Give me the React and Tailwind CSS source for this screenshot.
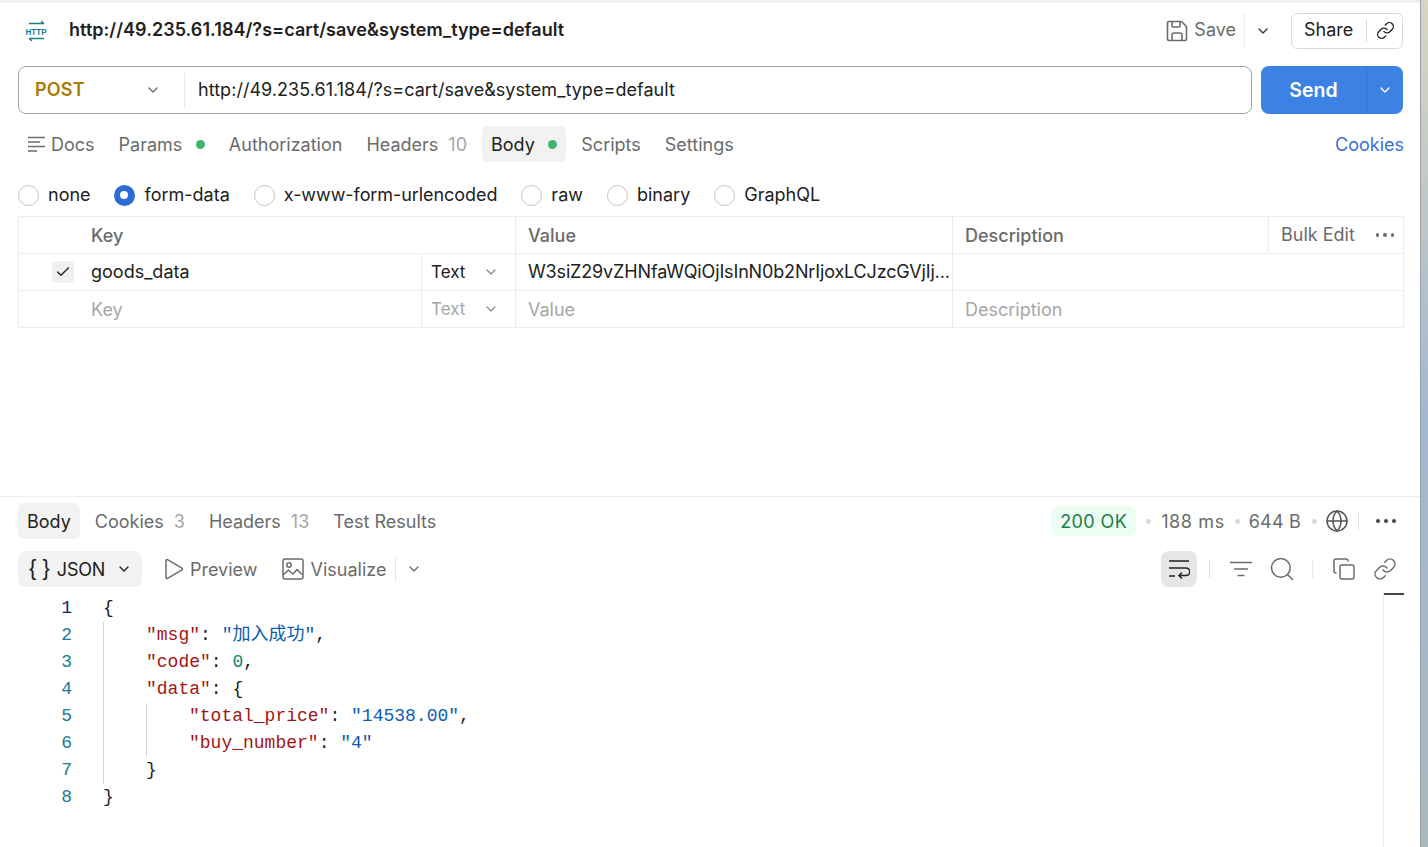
import React from 'react';
import { ChevronDown, Check, Search, Globe, Copy, Link } from 'lucide-react';

const HttpIcon = () => (
  <svg width="24" height="22" viewBox="0 0 24 22" fill="none" className="text-[#17808f]">
    <path d="M5 3.500h15M17 1 20 3.500" stroke="currentColor" strokeWidth="1.3" />
    <path d="M20 18.500H5M8 21 5 18.500" stroke="currentColor" strokeWidth="1.3" />
    <text transform="translate(12 14.500) scale(0.85 1)" textAnchor="middle" fontSize="9.5" fontWeight="700" fill="currentColor" fontFamily="Liberation Sans">HTTP</text>
  </svg>
);

const SaveIcon = () => (
  <svg width="22" height="22" viewBox="0 0 22 22" fill="none" stroke="#6b6b6b" strokeWidth="1.6" strokeLinejoin="round">
    <path d="M1.500 3A1.500 1.500 0 0 1 3 1.500h12.500L20.500 6.500V19a1.500 1.500 0 0 1-1.500 1.500H3A1.500 1.500 0 0 1 1.500 19z" />
    <path d="M6 1.500V6a1 1 0 0 0 1 1h6a1 1 0 0 0 1-1V1.500" />
    <path d="M6 20.500V15a2 2 0 0 1 2-2h6a2 2 0 0 1 2 2v5.500" />
  </svg>
);

const DocsIcon = () => (
  <svg width="17" height="16" viewBox="0 0 17 16" fill="none" stroke="#6b6b6b" strokeWidth="1.5">
    <path d="M0 1.500h17M0 6h12M0 10.500h17M0 15h9" />
  </svg>
);

const PlayIcon = () => (
  <svg width="20" height="22" viewBox="0 0 20 22" fill="none" stroke="#6b6b6b" strokeWidth="1.5" strokeLinejoin="round">
    <path d="M2 2.500v17a1 1 0 0 0 1.500.8l14.500-8.500a1 1 0 0 0 0-1.600L3.500 1.700A1 1 0 0 0 2 2.500z" />
  </svg>
);

const ImageIcon = () => (
  <svg width="22" height="22" viewBox="0 0 22 22" fill="none" stroke="#6b6b6b" strokeWidth="1.5" strokeLinejoin="round">
    <rect x="1" y="1" width="20" height="20" rx="2" />
    <circle cx="7" cy="7" r="2.200" />
    <path d="m1 17 5.500-5 4.500 4 4-4.500 5 5" />
  </svg>
);

const WrapIcon = () => (
  <svg width="22" height="20" viewBox="0 0 22 20" fill="none" stroke="#222" strokeWidth="1.5">
    <path d="M1 2h20M1 9h17a3 3 0 0 1 0 7.500h-7M14 13.500l-3 3 3 3M1 17h6" />
  </svg>
);

const FilterIcon = () => (
  <svg width="22" height="16" viewBox="0 0 22 16" fill="none" stroke="#6b6b6b" strokeWidth="1.5">
    <path d="M0 1.500h22M4 8h14M7.500 14.500h7" />
  </svg>
);

const Dots = ({ small }) => {
  const cls = small ? 'w-[3.500px] h-[3.500px] rounded-full bg-[#6b6b6b]' : 'w-[4px] h-[4px] rounded-full bg-[#444]';
  return (
    <div className="flex gap-[4px]">
      <span className={cls}></span>
      <span className={cls}></span>
      <span className={cls}></span>
    </div>
  );
};

const GreenDot = () => <span className="w-[9px] h-[9px] rounded-full bg-[#3fb56f] ml-[13.5px]"></span>;

const Tab = ({ label, count, dot, active, icon }) => (
  <div className={`h-[36px] px-[9px] flex items-center rounded-[6px] ${active ? 'bg-[#f2f2f2] text-[#212121]' : 'text-[#6b6b6b]'}`}>
    {icon && <span className="mr-[6px]">{icon}</span>}
    <span>{label}</span>
    {count && <span className="ml-[10px] text-[#a6a6a6]">{count}</span>}
    {dot && <GreenDot />}
  </div>
);

const Radio = ({ label, checked, labelClass = '' }) => (
  <div className="flex items-center gap-[9px]">
    {checked ? (
      <span className="-ml-px mr-px w-[21px] h-[21px] rounded-full bg-[#2f6bd6] flex items-center justify-center">
        <span className="w-[8px] h-[8px] rounded-full bg-white"></span>
      </span>
    ) : (
      <span className="w-[21px] h-[21px] rounded-full border border-[#c4c4c4]"></span>
    )}
    <span className={`text-[#212121] mb-[2px] ${labelClass}`}>{label}</span>
  </div>
);

const Cell = ({ children, className = '' }) => (
  <div className={`flex items-center min-w-0 px-[12px] border-l border-[#ededed] first:border-l-0 ${className}`}>{children}</div>
);

const Row = ({ children }) => (
  <div className="grid grid-cols-[402px_94px_437px_1fr] h-[37px] border-b border-[#ededed]">{children}</div>
);

const Str = ({ children }) => <span className="text-[#0b5cb5]">{children}</span>;
const Key = ({ children }) => <span className="text-[#a31515]">{children}</span>;

export default function App() {
  return (
    <div className="flex h-screen overflow-hidden font-['Inter','Noto_Sans_CJK_SC',sans-serif] text-[18px] bg-white">
      <div className="w-[1420px] shrink-0 flex flex-col">
        <div className="h-[3px] bg-[#f0f0f0]"></div>

        {/* request panel */}
        <div className="h-[493px] shrink-0">
          <div className="h-[54px] flex items-center pl-[24px] pr-[17px] pt-[1px]">
            <HttpIcon />
            <span className="ml-[21px] mb-[2px] font-semibold text-[#212121] tracking-[0.04px]">http://49.235.61.184/?s=cart/save&amp;system_type=default</span>
            <div className="ml-auto flex items-center">
              <SaveIcon />
              <span className="ml-[6px] mb-[2px] text-[#6b6b6b]">Save</span>
              <span className="ml-[8px] w-px h-[36px] bg-[#ededed]"></span>
              <ChevronDown size={16} strokeWidth={2} className="ml-[10px] text-[#333]" />
              <div className="ml-[20px] w-[112px] h-[36px] border border-[#d9d9d9] rounded-[6px] flex items-center">
                <span className="ml-[12px] mb-[2px] text-[#212121]">Share</span>
                <span className="ml-[13px] w-px h-[22px] bg-[#d9d9d9]"></span>
                <Link size={19} strokeWidth={1.7} className="ml-[9px] text-[#212121]" />
              </div>
            </div>
          </div>

          <div className="mt-[9px] ml-[18px] mr-[17px] flex gap-[9px]">
            <div className="w-[1234px] h-[48px] border border-[#a6a6a6] rounded-[8px] flex items-center">
              <div className="w-[165px] pl-[16px] pr-[23px] flex items-center justify-between">
                <span className="font-semibold text-[#ad7a03] mb-[2px] tracking-[0.2px]">POST</span>
                <ChevronDown size={16} className="text-[#6b6b6b]" />
              </div>
              <span className="w-px h-[34px] bg-[#e6e6e6]"></span>
              <span className="ml-[13px] mb-[2px] text-[#212121] tracking-[0.04px]">http://49.235.61.184/?s=cart/save&amp;system_type=default</span>
            </div>
            <div className="w-[142px] h-[48px] rounded-[8px] bg-[#3b82e4] flex text-white">
              <span className="w-[106px] pt-[1px] flex items-center justify-center font-semibold text-[19.5px] border-r border-[#3674cc]">Send</span>
              <span className="flex-1 flex items-center justify-center">
                <ChevronDown size={16} />
              </span>
            </div>
          </div>

          <div className="mt-[12px] ml-[19px] mr-[16px] flex items-center gap-[6px]">
            <Tab label="Docs" icon={<DocsIcon />} />
            <Tab label="Params" dot />
            <Tab label="Authorization" />
            <Tab label="Headers" count="10" />
            <Tab label="Body" dot active />
            <Tab label="Scripts" />
            <Tab label="Settings" />
            <span className="ml-auto text-[#3a6fd8]">Cookies</span>
          </div>

          <div className="mt-[17px] ml-[18px] h-[32px] flex items-center gap-[24px]">
            <Radio label="none" />
            <Radio label="form-data" checked />
            <Radio label="x-www-form-urlencoded" labelClass="tracking-[-0.07px]" />
            <Radio label="raw" />
            <Radio label="binary" />
            <Radio label="GraphQL" />
          </div>

          <div className="mt-[5px] ml-[18px] w-[1386px] border border-[#ededed] border-b-0">
            <Row>
              <Cell className="col-span-2 pl-[72px] font-medium text-[#6b6b6b]">Key</Cell>
              <Cell className="font-medium text-[#6b6b6b]">Value</Cell>
              <div className="flex border-l border-[#ededed]">
                <span className="w-[315px] flex items-center pl-[12px] font-medium text-[#6b6b6b]">Description</span>
                <div className="flex-1 border-l border-[#ededed] flex items-center justify-between pl-[12px] pr-[9px] text-[#6b6b6b]">
                  <span className="mb-[2px]">Bulk Edit</span>
                  <Dots small />
                </div>
              </div>
            </Row>
            <Row>
              <Cell className="pl-[33px]">
                <span className="w-[22px] h-[22px] rounded-[4px] bg-[#f0f0f0] flex items-center justify-center mr-[17px] shrink-0">
                  <Check size={16} strokeWidth={2} className="text-[#212121]" />
                </span>
                <span className="text-[#212121] mb-[2px]">goods_data</span>
              </Cell>
              <Cell className="pl-[9px] pr-[16px] justify-between text-[#212121]">
                <span className="text-[17px] pt-[1px]">Text</span>
                <ChevronDown size={16} className="text-[#8c8c8c]" />
              </Cell>
              <Cell className="pr-0 text-[#212121]">
                <span className="whitespace-nowrap tracking-[-0.15px] mb-[1px]">W3siZ29vZHNfaWQiOjIsInN0b2NrIjoxLCJzcGVjIj...</span>
              </Cell>
              <Cell></Cell>
            </Row>
            <Row>
              <Cell className="pl-[72px] pt-[1px] text-[#a6a6a6]">Key</Cell>
              <Cell className="pl-[9px] pr-[16px] justify-between text-[#a6a6a6]">
                <span className="text-[17px] pt-[2px]">Text</span>
                <ChevronDown size={16} className="text-[#8c8c8c]" />
              </Cell>
              <Cell className="pt-[1px] text-[#a6a6a6]">Value</Cell>
              <Cell className="pt-[1px] text-[#a6a6a6]">Description</Cell>
            </Row>
          </div>
        </div>

        {/* response panel */}
        <div className="flex-1 min-h-0 border-t border-[#ededed]">
          <div className="mt-[6px] ml-[18px] mr-[24px] flex items-center gap-[6px]">
            <Tab label="Body" active />
            <Tab label="Cookies" count="3" />
            <Tab label="Headers" count="13" />
            <Tab label="Test Results" />
            <div className="ml-auto flex items-center text-[#6b6b6b]">
              <span className="h-[30px] px-[9px] flex items-center rounded-[8px] bg-[#ecfdf3] text-[#1a7f4b] tracking-[0.4px]">200 OK</span>
              <span className="mx-[10px] w-[5px] h-[5px] rounded-full bg-[#d9d9d9]"></span>
              <span className="tracking-[0.6px]">188 ms</span>
              <span className="ml-[10px] mr-[9px] w-[5px] h-[5px] rounded-full bg-[#d9d9d9]"></span>
              <span className="tracking-[0.2px]">644 B</span>
              <span className="ml-[11px] mr-[8px] w-[5px] h-[5px] rounded-full bg-[#d9d9d9]"></span>
              <Globe size={24} strokeWidth={1.5} className="text-[#555]" />
              <span className="ml-[9px] w-px h-[18px] bg-[#e6e6e6]"></span>
              <span className="ml-[17px]"><Dots /></span>
            </div>
          </div>

          <div className="mt-[12px] ml-[18px] mr-[23px] h-[36px] flex items-center text-[#6b6b6b]">
            <div className="w-[124px] h-[36px] rounded-[8px] bg-[#f2f2f2] flex items-center pl-[11px] text-[#212121]">
              <span className="font-['Liberation_Sans',sans-serif] text-[22px] leading-none mb-[3px]">{'{ }'}</span>
              <span className="ml-[7px] tracking-[-0.2px]">JSON</span>
              <ChevronDown size={16} strokeWidth={2} className="ml-[11px]" />
            </div>
            <span className="ml-[22px]"><PlayIcon /></span>
            <span className="ml-[6px]">Preview</span>
            <span className="ml-[24px]"><ImageIcon /></span>
            <span className="ml-[7px]">Visualize</span>
            <span className="ml-[9px] w-px h-[24px] bg-[#e6e6e6]"></span>
            <ChevronDown size={16} className="ml-[10px]" />
            <div className="ml-auto flex items-center">
              <span className="w-[36px] h-[36px] rounded-[8px] bg-[#e6e6e6] flex items-center justify-center"><WrapIcon /></span>
              <span className="ml-[12px] w-px h-[18px] bg-[#dcdcdc]"></span>
              <span className="ml-[20px]"><FilterIcon /></span>
              <Search size={28} strokeWidth={1.3} className="ml-[16px] text-[#6b6b6b]" />
              <span className="ml-[16px] w-px h-[18px] bg-[#e6e6e6]"></span>
              <Copy size={24} strokeWidth={1.5} className="ml-[19px] text-[#6b6b6b]" />
              <Link size={24} strokeWidth={1.5} className="ml-[17px] text-[#6b6b6b]" />
            </div>
          </div>

          <div className="mt-[6px] flex font-['Liberation_Mono','Noto_Sans_CJK_SC',monospace] leading-[27px] text-[#212121]">
            <div className="w-[72px] pt-[2px] text-right text-[#237893]">
              <div className="text-[#0b216f]">1</div>
              {[2, 3, 4, 5, 6, 7, 8].map((n) => <div key={n}>{n}</div>)}
            </div>
            <div className="ml-[31px] w-[1280px] pt-[2px] whitespace-pre">
              <div>{'{'}</div>
              <div className="border-l-[1.500px] border-[#d4d4d4] pl-[42px]">
                <div><Key>"msg"</Key>: <Str>"加入成功"</Str>,</div>
                <div><Key>"code"</Key>: <span className="text-[#098a70]">0</span>,</div>
                <div><Key>"data"</Key>: {'{'}</div>
                <div className="border-l-[1.500px] border-[#d4d4d4] pl-[42px]">
                  <div><Key>"total_price"</Key>: <Str>"14538.00"</Str>,</div>
                  <div><Key>"buy_number"</Key>: <Str>"4"</Str></div>
                </div>
                <div>{'}'}</div>
              </div>
              <div>{'}'}</div>
            </div>
            <div className="w-[21px] h-[260px] border-l border-[#ededed]">
              <div className="h-[2px] bg-[#444]"></div>
            </div>
          </div>
        </div>
      </div>

      {/* desktop showing past the window edge */}
      <div className="flex-1 bg-gradient-to-b from-[#d8d6c0] via-[#a3b7d0] to-[#aab8bc] border-l border-[#9aa0a6]"></div>
    </div>
  );
}
